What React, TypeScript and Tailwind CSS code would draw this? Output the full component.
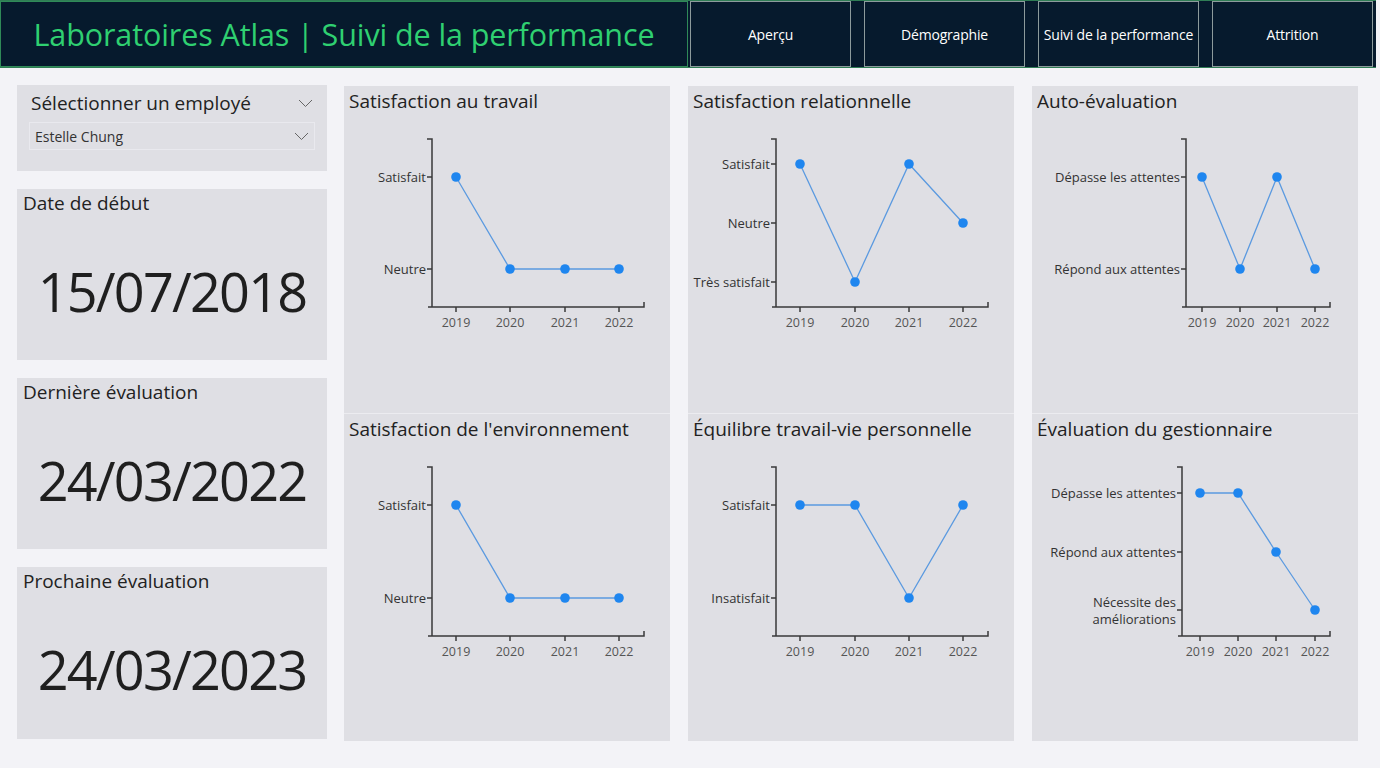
import React from "react";

type Tick = { label: string[]; y: number };

interface ChartSpec {
  title: string;
  axisX: number;
  top: number;
  bottom: number;
  xEnd: number;
  ticks: Tick[];
  xs: number[];
  ys: number[];
}

const YEARS = ["2019", "2020", "2021", "2022"];

const TOP_ROW: ChartSpec[] = [
  {
    title: "Satisfaction au travail",
    axisX: 88, top: 53, bottom: 221, xEnd: 300,
    ticks: [{ label: ["Satisfait"], y: 91 }, { label: ["Neutre"], y: 183 }],
    xs: [112, 166, 221, 275],
    ys: [91, 183, 183, 183],
  },
  {
    title: "Satisfaction relationnelle",
    axisX: 88, top: 53, bottom: 221, xEnd: 300,
    ticks: [
      { label: ["Satisfait"], y: 78 },
      { label: ["Neutre"], y: 137 },
      { label: ["Très satisfait"], y: 196 },
    ],
    xs: [112, 167, 221, 275],
    ys: [78, 196, 78, 137],
  },
  {
    title: "Auto-évaluation",
    axisX: 154, top: 53, bottom: 221, xEnd: 298,
    ticks: [{ label: ["Dépasse les attentes"], y: 91 }, { label: ["Répond aux attentes"], y: 183 }],
    xs: [170, 208, 245, 283],
    ys: [91, 183, 91, 183],
  },
];

const BOTTOM_ROW: ChartSpec[] = [
  {
    title: "Satisfaction de l'environnement",
    axisX: 88, top: 53, bottom: 222, xEnd: 300,
    ticks: [{ label: ["Satisfait"], y: 91 }, { label: ["Neutre"], y: 184 }],
    xs: [112, 166, 221, 275],
    ys: [91, 184, 184, 184],
  },
  {
    title: "Équilibre travail-vie personnelle",
    axisX: 88, top: 53, bottom: 222, xEnd: 300,
    ticks: [{ label: ["Satisfait"], y: 91 }, { label: ["Insatisfait"], y: 184 }],
    xs: [112, 167, 221, 275],
    ys: [91, 91, 184, 91],
  },
  {
    title: "Évaluation du gestionnaire",
    axisX: 150, top: 53, bottom: 222, xEnd: 298,
    ticks: [
      { label: ["Dépasse les attentes"], y: 79 },
      { label: ["Répond aux attentes"], y: 138 },
      { label: ["Nécessite des", "améliorations"], y: 196 },
    ],
    xs: [168, 206, 244, 283],
    ys: [79, 79, 138, 196],
  },
];

const NAV = ["Aperçu", "Démographie", "Suivi de la performance", "Attrition"];

function Chevron({ className }: { className?: string }) {
  return (
    <svg className={className} width="15" height="9" viewBox="0 0 15 9" fill="none">
      <path d="M1 1l6.5 6.5L14 1" stroke="#666" strokeWidth="1" />
    </svg>
  );
}

function LineChart({ spec }: { spec: ChartSpec }) {
  const { axisX, top, bottom, xEnd, ticks, xs, ys } = spec;
  const pts = xs.map((x, i) => `${x},${ys[i]}`).join(" ");
  return (
    <svg width="326" height="295" viewBox="0 32 326 295" className="block">
      {/* axes */}
      <path d={`M${axisX - 5} ${top}H${axisX}V${bottom}`} stroke="#3a3a3a" strokeWidth="1.5" fill="none" />
      <path d={`M${axisX - 4} ${bottom}H${xEnd}V${bottom - 5}`} stroke="#3a3a3a" strokeWidth="1.5" fill="none" />
      {xs.map((x) => (
        <line key={x} x1={x} y1={bottom} x2={x} y2={bottom + 5} stroke="#3a3a3a" strokeWidth="1.5" />
      ))}
      {ticks.map((t) => (
        <g key={t.label.join()}>
          <line x1={axisX - 5} y1={t.y} x2={axisX} y2={t.y} stroke="#3a3a3a" strokeWidth="1.5" />
          {t.label.length === 1 ? (
            <text x={axisX - 6} y={t.y + 4.5} textAnchor="end" fontSize="13" fill="#333">
              {t.label[0]}
            </text>
          ) : (
            t.label.map((l, i) => (
              <text key={l} x={axisX - 6} y={t.y - 3 + i * 17} textAnchor="end" fontSize="13" fill="#333">
                {l}
              </text>
            ))
          )}
        </g>
      ))}
      {xs.map((x, i) => (
        <text key={YEARS[i]} x={x} y={bottom + 20} textAnchor="middle" fontSize="12.5" fill="#555">
          {YEARS[i]}
        </text>
      ))}
      <polyline points={pts} fill="none" stroke="#5b9ae0" strokeWidth="1.3" />
      {xs.map((x, i) => (
        <circle key={x} cx={x} cy={ys[i]} r="4.8" fill="#1f86ef" />
      ))}
    </svg>
  );
}

function ChartHalf({ spec }: { spec: ChartSpec }) {
  return (
    <div className="h-[327px] flex flex-col">
      <div className="h-[32px] pl-[5px] pt-[1px] text-[19px] leading-[28px] text-[#222]">{spec.title}</div>
      <LineChart spec={spec} />
    </div>
  );
}

function DateCard({ label, value, tall }: { label: string; value: string; tall?: boolean }) {
  return (
    <div className={`${tall ? "h-[172px]" : "h-[171px]"} bg-[#dfdfe4] flex flex-col`}>
      <div className="h-[28px] pl-[6px] pt-[1px] text-[19px] leading-[26px] text-[#222]">{label}</div>
      <div className="mt-[44px] text-center text-[54px] leading-[60px] tracking-[-1.8px] text-[#1f1f1f]">
        {value}
      </div>
    </div>
  );
}

export default function App() {
  return (
    <div className="w-[1380px] h-[768px] bg-[#f3f3f7] font-['Open_Sans',sans-serif] overflow-hidden">
      {/* Header */}
      <div className="w-[1376px] h-[68px] flex bg-[#061a2d] border-y border-[#2f7d55]">
        <div className="w-[688px] h-full flex items-center justify-center border-[1.5px] border-[#2f8a58]">
          <h1 className="text-[30.5px] leading-none text-[#2fd071] tracking-[-0.1px]">
            Laboratoires Atlas | Suivi de la performance
          </h1>
        </div>
        <div className="flex-1 flex gap-[13px] pl-[2px]">
          {NAV.map((n) => (
            <div
              key={n}
              className="w-[161px] h-full flex items-center justify-center border border-[#8c9b9c] text-white text-[14px] tracking-[-0.2px]"
            >
              {n}
            </div>
          ))}
        </div>
      </div>

      {/* Body */}
      <div className="flex pl-[17px] pt-[17px] gap-[17px]">
        <div className="w-[310px] flex flex-col gap-[18px]">
          <div className="h-[86px] bg-[#dfdfe4] px-[12px] pt-[4px]">
            <div className="flex items-center justify-between pl-[2px] pr-[2px]">
              <span className="text-[19px] leading-[28px] text-[#222]">Sélectionner un employé</span>
              <Chevron />
            </div>
            <div className="mt-[5px] h-[28px] border border-[#e9e9ee] flex items-center justify-between pl-[5px] pr-[5px]">
              <span className="text-[14px] text-[#333]">Estelle Chung</span>
              <Chevron />
            </div>
          </div>
          <DateCard label="Date de début" value="15/07/2018" />
          <DateCard label="Dernière évaluation" value="24/03/2022" />
          <DateCard label="Prochaine évaluation" value="24/03/2023" tall />
        </div>

        <div className="flex gap-[18px] pt-[1px]">
          {TOP_ROW.map((spec, i) => (
            <div key={spec.title} className="w-[326px] bg-[#dfdfe4] flex flex-col">
              <ChartHalf spec={spec} />
              <div className="h-px bg-[#ececf0]" />
              <ChartHalf spec={BOTTOM_ROW[i]} />
            </div>
          ))}
        </div>
      </div>
    </div>
  );
}
